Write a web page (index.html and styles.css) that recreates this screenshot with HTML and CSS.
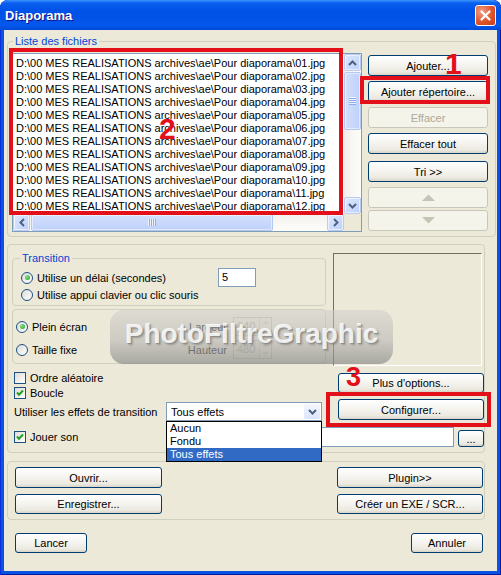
FILE: index.html
```html
<!DOCTYPE html>
<html lang="fr">
<head>
	<meta charset="UTF-8">
	<title>Diaporama</title>
	<link rel="stylesheet" href="styles.css">
</head>
<body>
<div class="window">
	<div class="title-bar">
		<span class="title">Diaporama</span>
		<span class="close-btn">
			<svg width="13" height="13" viewBox="0 0 13 13"><path d="M2.5 2.5 L10.5 10.5 M10.5 2.5 L2.5 10.5" stroke="#fff" stroke-width="2.2" stroke-linecap="round"/></svg>
		</span>
	</div>
	<div class="client">
		<!-- liste des fichiers -->
		<fieldset class="group files-group">
			<legend>Liste des fichiers</legend>
			<div class="files-row">
				<div class="listbox">
					<div class="list-main">
						<ul class="list-items">
							<li>D:\00 MES REALISATIONS archives\ae\Pour diaporama\01.jpg</li>
							<li>D:\00 MES REALISATIONS archives\ae\Pour diaporama\02.jpg</li>
							<li>D:\00 MES REALISATIONS archives\ae\Pour diaporama\03.jpg</li>
							<li>D:\00 MES REALISATIONS archives\ae\Pour diaporama\04.jpg</li>
							<li>D:\00 MES REALISATIONS archives\ae\Pour diaporama\05.jpg</li>
							<li>D:\00 MES REALISATIONS archives\ae\Pour diaporama\06.jpg</li>
							<li>D:\00 MES REALISATIONS archives\ae\Pour diaporama\07.jpg</li>
							<li>D:\00 MES REALISATIONS archives\ae\Pour diaporama\08.jpg</li>
							<li>D:\00 MES REALISATIONS archives\ae\Pour diaporama\09.jpg</li>
							<li>D:\00 MES REALISATIONS archives\ae\Pour diaporama\10.jpg</li>
							<li>D:\00 MES REALISATIONS archives\ae\Pour diaporama\11.jpg</li>
							<li>D:\00 MES REALISATIONS archives\ae\Pour diaporama\12.jpg</li>
						</ul>
						<div class="vscroll">
							<div class="sb-btn"><svg width="9" height="6" viewBox="0 0 9 6"><path d="M1 5 L4.5 1.5 L8 5" fill="none" stroke="#4d6185" stroke-width="2"/></svg></div>
							<div class="vtrack"><div class="vthumb"></div></div>
							<div class="sb-btn"><svg width="9" height="6" viewBox="0 0 9 6"><path d="M1 1 L4.5 4.5 L8 1" fill="none" stroke="#4d6185" stroke-width="2"/></svg></div>
						</div>
					</div>
					<div class="hscroll-row">
						<div class="sb-btn"><svg width="6" height="9" viewBox="0 0 6 9"><path d="M5 1 L1.5 4.5 L5 8" fill="none" stroke="#4d6185" stroke-width="2"/></svg></div>
						<div class="htrack"><div class="hthumb"></div></div>
						<div class="sb-btn"><svg width="6" height="9" viewBox="0 0 6 9"><path d="M1 1 L4.5 4.5 L1 8" fill="none" stroke="#4d6185" stroke-width="2"/></svg></div>
						<div class="sb-corner"></div>
					</div>
				</div>
				<div class="side-buttons">
					<button class="btn">Ajouter...</button>
					<button class="btn">Ajouter répertoire...</button>
					<button class="btn" disabled>Effacer</button>
					<button class="btn">Effacer tout</button>
					<button class="btn btn-tri">Tri &gt;&gt;</button>
					<button class="btn" disabled><svg width="13" height="7" viewBox="0 0 13 7"><path d="M0 7 L6.5 0.5 L13 7Z" fill="#c6c4b6"/></svg></button>
					<button class="btn btn-down" disabled><svg width="13" height="7" viewBox="0 0 13 7"><path d="M0 0 L6.5 6.5 L13 0Z" fill="#c6c4b6"/></svg></button>
				</div>
			</div>
		</fieldset>

		<!-- options -->
		<div class="panel options-panel">
			<div class="options-top">
				<div class="options-left">
					<fieldset class="group transition-group">
						<legend>Transition</legend>
						<div class="opt-row delay-row">
							<label class="radio-label"><span class="radio checked"></span>Utilise un délai (secondes)</label>
							<span class="textbox delay-box">5</span>
						</div>
						<div class="opt-row key-row">
							<label class="radio-label"><span class="radio"></span>Utilise appui clavier ou clic souris</label>
						</div>
					</fieldset>
					<fieldset class="group size-group">
						<div class="opt-row size-row">
							<label class="radio-label size-radio"><span class="radio checked"></span>Plein écran</label>
							<span class="field-label">Largeur</span>
							<span class="spin"><span class="spin-value">640</span><span class="spin-arrows"><svg width="7" height="4" viewBox="0 0 7 4"><path d="M0 4 L3.5 0.5 L7 4Z" fill="#d6d4c8"/></svg><svg width="7" height="4" viewBox="0 0 7 4"><path d="M0 0 L3.5 3.5 L7 0Z" fill="#d6d4c8"/></svg></span></span>
						</div>
						<div class="opt-row size-row">
							<label class="radio-label size-radio"><span class="radio"></span>Taille fixe</label>
							<span class="field-label">Hauteur</span>
							<span class="spin"><span class="spin-value">480</span><span class="spin-arrows"><svg width="7" height="4" viewBox="0 0 7 4"><path d="M0 4 L3.5 0.5 L7 4Z" fill="#d6d4c8"/></svg><svg width="7" height="4" viewBox="0 0 7 4"><path d="M0 0 L3.5 3.5 L7 0Z" fill="#d6d4c8"/></svg></span></span>
						</div>
					</fieldset>
				</div>
				<div class="preview"></div>
			</div>
			<div class="options-bottom">
				<div class="checks">
					<label class="check-label"><span class="check"></span>Ordre aléatoire</label>
					<label class="check-label"><span class="check"><svg width="8" height="8" viewBox="0 0 8 8"><path d="M1 3.5 L3 5.8 L7 1.5" fill="none" stroke="#21a121" stroke-width="2"/></svg></span>Boucle</label>
				</div>
				<button class="btn btn-more">Plus d'options...</button>
				<div class="effects-row">
					<span class="effects-label">Utiliser les effets de transition</span>
					<div class="combo">
						<span class="combo-value">Tous effets</span>
						<span class="combo-arrow"><svg width="9" height="6" viewBox="0 0 9 6"><path d="M1 1 L4.5 4.5 L8 1" fill="none" stroke="#4d6185" stroke-width="2"/></svg></span>
						<ul class="combo-list">
							<li>Aucun</li>
							<li>Fondu</li>
							<li class="selected">Tous effets</li>
						</ul>
					</div>
				</div>
				<button class="btn btn-config">Configurer...</button>
				<div class="sound-row">
					<label class="check-label sound-label"><span class="check"><svg width="8" height="8" viewBox="0 0 8 8"><path d="M1 3.5 L3 5.8 L7 1.5" fill="none" stroke="#21a121" stroke-width="2"/></svg></span>Jouer son</label>
					<span class="textbox sound-box"></span>
					<button class="btn btn-browse">...</button>
				</div>
			</div>
		</div>

		<!-- fichiers projet -->
		<div class="panel actions-panel">
			<div class="actions-col">
				<button class="btn btn-open">Ouvrir...</button>
				<button class="btn">Enregistrer...</button>
			</div>
			<div class="actions-col">
				<button class="btn btn-open">Plugin&gt;&gt;</button>
				<button class="btn">Créer un EXE / SCR...</button>
			</div>
		</div>

		<div class="footer">
			<button class="btn btn-small">Lancer</button>
			<button class="btn btn-small">Annuler</button>
		</div>
	</div>

	<!-- filigrane et annotations -->
	<div class="watermark">PhotoFiltreGraphic</div>
	<div class="mark-box box-list"></div>
	<div class="mark-box box-folder"></div>
	<div class="mark-box box-config"></div>
	<span class="mark-num num-1">1</span>
	<span class="mark-num num-2">2</span>
	<span class="mark-num num-3">3</span>
</div>
</body>
</html>
```

FILE: styles.css
```css
* {
	box-sizing: border-box;
}

body {
	margin: 0;
	background: #fff;
	font-family: "Liberation Sans", Arial, sans-serif;
	font-size: 11px;
	font-weight: normal;
	color: #000;
}

.window {
	position: relative;
	display: flex;
	flex-direction: column;
	width: 501px;
	height: 575px;
	overflow: hidden;
	border-radius: 8px 8px 0 0;
	background: #0a52e2;
	box-shadow: inset 1px 0 #0831d9, inset -1px 0 #001ea0, inset 0 -1px #001ea0;
}

/* barre de titre */
.title-bar {
	display: flex;
	align-items: center;
	justify-content: space-between;
	height: 30px;
	padding: 0 5px;
	border-radius: 8px 8px 0 0;
	background: linear-gradient(#3d95ff 0, #0a5fef 3px, #0053e8 10px, #0051e6 50%, #0458ec 85%, #0048d8 100%);
}

.title {
	color: #fff;
	font-weight: bold;
	font-size: 13px;
	text-shadow: 1px 1px #0f1089;
}

.close-btn {
	display: flex;
	align-items: center;
	justify-content: center;
	width: 21px;
	height: 21px;
	border: 1px solid #fff;
	border-radius: 3px;
	background: radial-gradient(circle at 30% 30%, #f0a08a, #e0542c 55%, #c93b14);
}

.client {
	flex: 1;
	margin: 0 4px 4px;
	padding: 5px 0 0 3px;
	background: #ece9d8;
}

/* group boxes */
.group {
	margin: 0;
	min-width: 0;
	border: 1px solid #d0d0bf;
	border-radius: 4px;
}

.group legend {
	padding: 0 2px;
	line-height: 13px;
	color: #0046d5;
}

.files-group {
	width: 489px;
	padding: 5px 7px 4px 4px;
}

.files-group legend {
	margin-left: 1px;
}

.files-row {
	display: flex;
	justify-content: space-between;
}

/* listbox */
.listbox {
	display: flex;
	flex-direction: column;
	width: 350px;
	height: 179px;
	border: 1px solid #7f9db9;
	background: #fff;
}

.list-main {
	display: flex;
	flex: 1;
	min-height: 0;
}

.list-items {
	flex: 1;
	margin: 0;
	padding: 3px 0 0 3px;
	list-style: none;
	overflow: hidden;
}

.list-items li {
	height: 13px;
	line-height: 13px;
	white-space: nowrap;
}

.vscroll {
	display: flex;
	flex-direction: column;
	width: 17px;
	background: linear-gradient(90deg, #f3f1ec, #fdfdfa);
}

.sb-btn {
	display: flex;
	flex: none;
	align-items: center;
	justify-content: center;
	width: 17px;
	height: 17px;
	border: 1px solid #b7cbf5;
	border-radius: 2px;
	background: linear-gradient(135deg, #dfe8fe, #bdd0fa);
	box-shadow: inset 0 0 0 1px rgba(255, 255, 255, 0.6);
}

.vtrack {
	flex: 1;
	padding-top: 1px;
}

.vthumb,
.hthumb {
	display: flex;
	align-items: center;
	justify-content: center;
	border: 1px solid #b3c7f3;
	border-radius: 2px;
	background: linear-gradient(90deg, #d3e0fd, #bfd1fa);
	box-shadow: inset 0 0 0 1px rgba(255, 255, 255, 0.5);
}

.vthumb {
	height: 58px;
}

.vthumb::before {
	content: "";
	width: 7px;
	height: 8px;
	background: repeating-linear-gradient(#eef3fe 0 1px, #8cadf3 1px 2px);
}

.hscroll-row {
	display: flex;
	height: 17px;
}

.htrack {
	flex: 1;
	padding-left: 1px;
	background: linear-gradient(#f3f1ec, #fdfdfa);
}

.hthumb {
	width: 242px;
	height: 17px;
	background: linear-gradient(#d3e0fd, #bfd1fa);
}

.hthumb::before {
	content: "";
	width: 8px;
	height: 7px;
	background: repeating-linear-gradient(90deg, #eef3fe 0 1px, #8cadf3 1px 2px);
}

.sb-corner {
	width: 17px;
	background: #ece9d8;
}

/* boutons */
.btn {
	display: flex;
	align-items: center;
	justify-content: center;
	height: 20px;
	padding: 0;
	border: 1px solid #003c74;
	border-radius: 3px;
	background: linear-gradient(#fff, #f4f3ee 50%, #ebe9e0 85%, #d8d3c6);
	font-family: inherit;
	font-size: 11px;
	font-weight: normal;
	color: #000;
}

.btn:disabled {
	border-color: #c9c7ba;
	background: #f5f4ea;
	color: #aca899;
}

.side-buttons {
	display: flex;
	flex-direction: column;
	gap: 5px;
	width: 120px;
	padding-top: 2px;
}

.side-buttons .btn {
	height: 21px;
}

.btn-tri {
	margin-top: 2px;
}

.btn-down {
	margin-top: -3px;
}

/* panneaux */
.panel {
	width: 478px;
	border: 1px solid #d0d0bf;
	border-radius: 4px;
}

.options-panel {
	margin-top: 7px;
	padding: 7px 2px 5px 4px;
}

.options-top {
	display: flex;
	gap: 7px;
}

.options-left {
	width: 314px;
}

.transition-group {
	padding: 3px 6px 2px 8px;
}

.transition-group legend {
	margin-left: -1px;
}

.opt-row {
	display: flex;
	align-items: center;
}

.delay-row {
	height: 19px;
}

.key-row {
	height: 16px;
}

.radio-label {
	display: flex;
	align-items: center;
	gap: 4px;
	font-weight: normal;
}

.delay-row .radio-label {
	width: 197px;
}

.radio {
	display: flex;
	flex: none;
	align-items: center;
	justify-content: center;
	width: 12px;
	height: 12px;
	border: 1px solid #1c5180;
	border-radius: 50%;
	background: linear-gradient(135deg, #dcdcd7, #fff);
}

.radio.checked::after {
	content: "";
	width: 5px;
	height: 5px;
	border-radius: 50%;
	background: radial-gradient(circle at 35% 35%, #8ce08a, #21a121);
}

.textbox {
	border: 1px solid #7f9db9;
	background: #fff;
}

.delay-box {
	width: 38px;
	height: 19px;
	padding-left: 3px;
	line-height: 17px;
}

.size-group {
	margin-top: 3px;
	padding: 6px 0 3px 3px;
}

.size-row {
	height: 21px;
}

.size-row + .size-row {
	margin-top: 2px;
}

.size-radio {
	width: 134px;
}

.field-label {
	width: 77px;
	margin-right: 6px;
	text-align: right;
	color: #222;
}

.spin {
	display: flex;
	width: 39px;
	height: 19px;
	border: 1px solid #c9c7ba;
	background: #ece9d8;
}

.spin-value {
	flex: 1;
	padding-left: 3px;
	line-height: 17px;
	color: #b5b2a3;
}

.spin-arrows {
	display: flex;
	flex-direction: column;
	align-items: center;
	justify-content: space-around;
	width: 12px;
	border-left: 1px solid #d6d4c8;
}

.preview {
	width: 149px;
	height: 113px;
	margin-top: 1px;
	border: 1px solid;
	border-color: #716f64 #fff #fff #716f64;
}

.options-bottom {
	display: grid;
	grid-template-columns: 1fr 146px;
	grid-template-rows: 29px 22px auto;
	margin: 4px -2px 0 0;
	padding-left: 2px;
}

.check-label {
	display: flex;
	align-items: center;
	gap: 4px;
	height: 15px;
	font-weight: normal;
}

.check {
	display: flex;
	flex: none;
	align-items: center;
	justify-content: center;
	width: 12px;
	height: 12px;
	border: 1px solid #1c5180;
	background: linear-gradient(135deg, #dcdcd7, #fff);
}

.btn-more {
	margin-top: 3px;
}

.effects-row {
	display: flex;
	align-items: center;
	padding-top: 3px;
}

.effects-label {
	width: 152px;
}

.combo {
	position: relative;
	display: flex;
	align-items: center;
	width: 156px;
	height: 19px;
	padding-left: 4px;
	border: 1px solid #7f9db9;
	background: #fff;
}

.combo-value {
	flex: 1;
}

.combo-arrow {
	display: flex;
	align-items: center;
	justify-content: center;
	width: 16px;
	height: 15px;
	margin-right: 1px;
	border-radius: 2px;
	background: linear-gradient(#f4f7fe, #dbe4fa);
}

.combo-list {
	position: absolute;
	top: 18px;
	left: -1px;
	z-index: 2;
	width: 156px;
	margin: 0;
	padding: 0;
	list-style: none;
	border: 1px solid #000;
	background: #fff;
}

.combo-list li {
	height: 13px;
	padding-left: 3px;
	line-height: 13px;
}

.combo-list .selected {
	background: #316ac5;
	color: #fff;
}

.btn-config {
	height: 21px;
}

.sound-row {
	display: flex;
	grid-column: 1 / -1;
	align-items: center;
	height: 20px;
	margin-top: 6px;
}

.sound-label {
	width: 152px;
}

.sound-box {
	flex: 1;
	height: 20px;
	margin-right: 4px;
}

.btn-browse {
	align-self: flex-end;
	width: 26px;
	height: 17px;
}

.actions-panel {
	display: flex;
	justify-content: space-between;
	margin-top: 8px;
	padding: 5px 1px 5px 7px;
}

.actions-col {
	display: flex;
	flex-direction: column;
	gap: 6px;
	width: 146px;
}

.actions-col:first-child {
	width: 147px;
}

.btn-open {
	height: 21px;
}

.footer {
	display: flex;
	justify-content: space-between;
	margin-top: 13px;
	padding: 0 14px 0 8px;
}

.btn-small {
	width: 72px;
}

/* filigrane */
.watermark {
	position: absolute;
	top: 310px;
	left: 110px;
	display: flex;
	align-items: center;
	justify-content: center;
	width: 283px;
	height: 54px;
	padding-bottom: 6px;
	border-radius: 14px;
	background: linear-gradient(rgba(205, 205, 203, 0.5), rgba(180, 180, 178, 0.55) 55%, rgba(140, 140, 138, 0.7));
	color: rgba(255, 255, 255, 0.85);
	font-weight: bold;
	font-size: 28px;
	text-shadow: 1px 1px 0 rgba(130, 130, 130, 0.6), 2px 2px 2px rgba(110, 110, 110, 0.5);
}

/* annotations */
.mark-box {
	position: absolute;
	border: 4px solid #e3101a;
}

.box-list {
	top: 48px;
	left: 9px;
	width: 334px;
	height: 167px;
}

.box-folder {
	top: 76px;
	left: 360px;
	width: 130px;
	height: 28px;
}

.box-config {
	top: 392px;
	left: 326px;
	width: 165px;
	height: 35px;
}

.mark-num {
	position: absolute;
	color: #e3101a;
	font-weight: bold;
	font-size: 30px;
	line-height: 30px;
}

.num-1 {
	top: 49px;
	left: 445px;
}

.num-2 {
	top: 114px;
	left: 159px;
}

.num-3 {
	top: 364px;
	left: 346px;
	font-size: 27px;
	line-height: 27px;
}
```
